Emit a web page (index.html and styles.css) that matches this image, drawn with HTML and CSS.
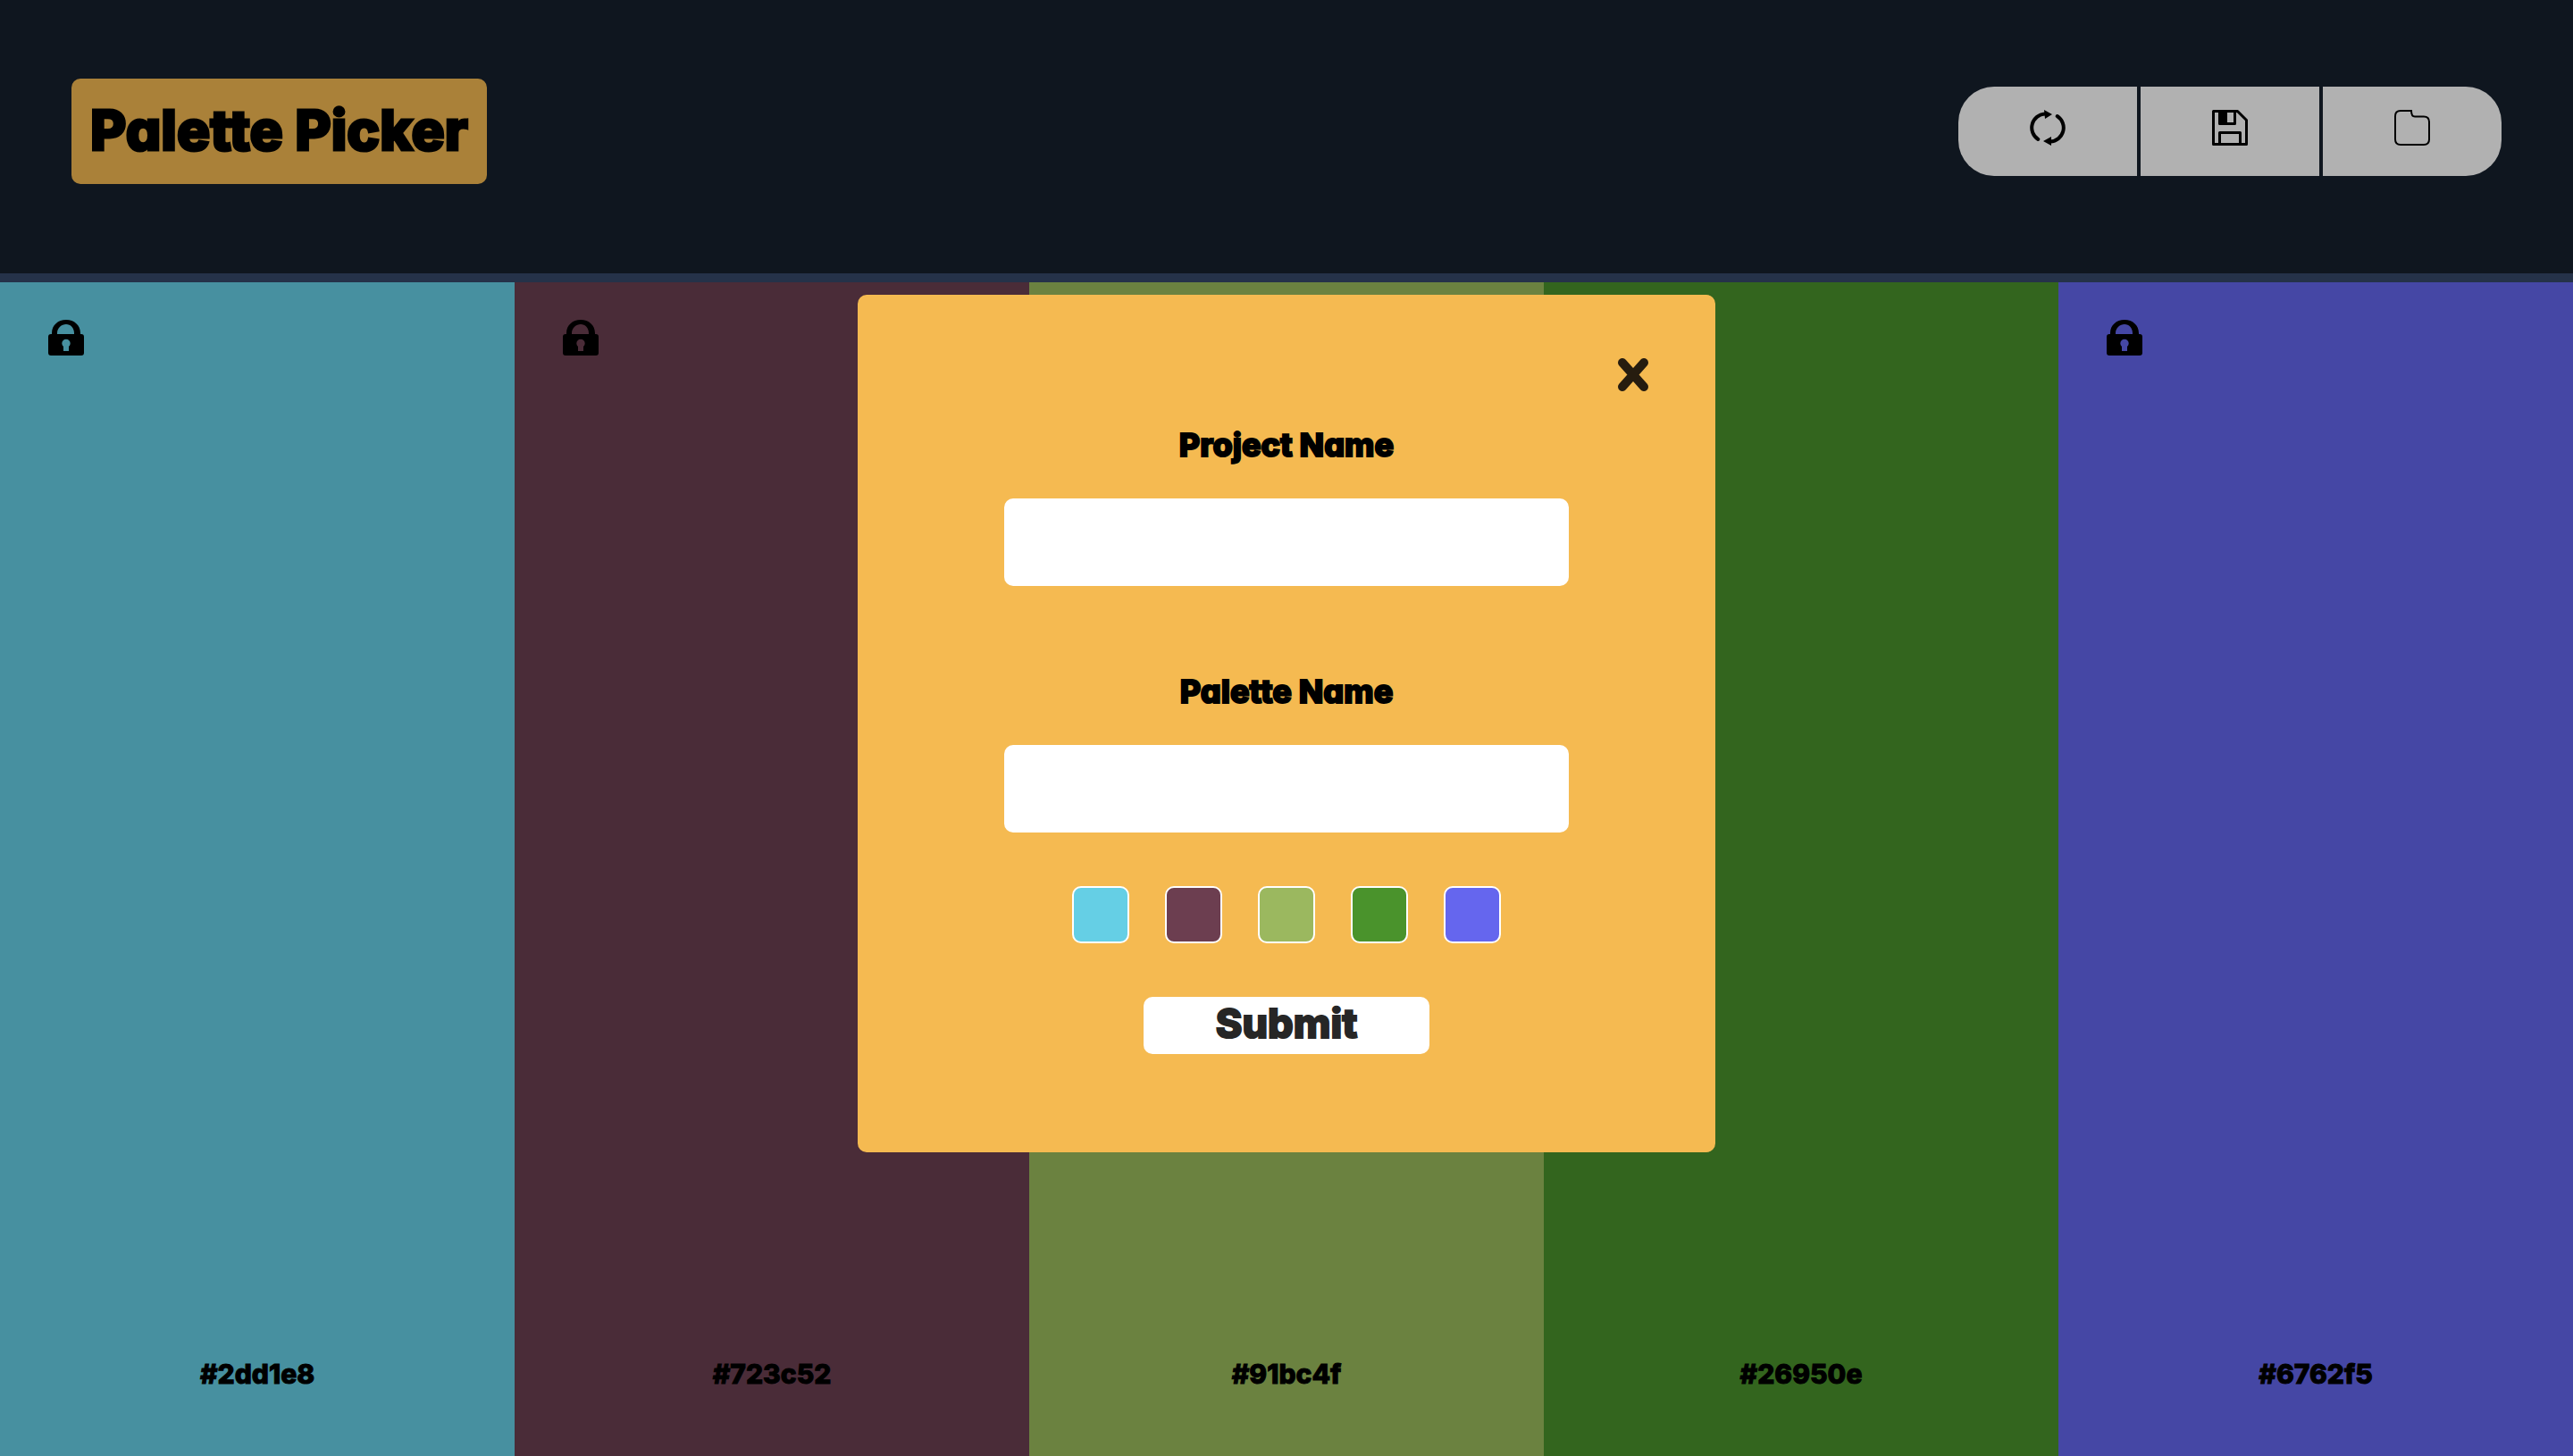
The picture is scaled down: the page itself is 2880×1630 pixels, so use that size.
FILE: index.html
```html
<!DOCTYPE html>
<html lang="en">
<head>
<meta charset="utf-8">
<meta name="viewport" content="width=device-width, initial-scale=1">
<title>Palette Picker</title>
<link rel="stylesheet" href="styles.css">
</head>
<body>
<svg class="sprite" aria-hidden="true">
  <symbol id="lock" viewBox="0 0 40 40">
    <path fill-rule="evenodd" d="M4 16v-1C4 6 11 0 20 0s16 6 16 15v1h1q3 0 3 3v18q0 3-3 3H3q-3 0-3-3V19q0-3 3-3zM10 16h19v-1c0-6-4-10-9-10s-10 4-10 10zM17 35V30a4.700 4.700 0 1 1 6 0v5z"/>
  </symbol>
</svg>
<div class="app">
  <header class="header">
    <h1 class="logo">Palette Picker</h1>
    <nav class="actions" aria-label="Palette actions">
      <button class="action" type="button" aria-label="Generate palette">
        <svg class="icon" viewBox="0 0 40 40">
          <path class="line" d="M9.300 33A15.500 15.500 0 0 1 17 4.500M30.700 7A15.500 15.500 0 0 1 23 35.500"/>
          <path d="M16 0l9 5-8 5zM24 30v10l-9-5z"/>
        </svg>
      </button>
      <button class="action" type="button" aria-label="Save palette">
        <svg class="icon" viewBox="0 0 40 40">
          <path class="line save" d="M1.500 1.500h27l10 10v27h-37zM8.500 38V25.500h23V38M8.500 2v13.500h17V2"/>
          <path d="M8 2h9v13H8z"/>
        </svg>
      </button>
      <button class="action" type="button" aria-label="Open projects">
        <svg class="icon" viewBox="0 0 40 40">
          <path class="line folder" d="M7 1h12c0 4 1 6.500 4 6.500h10q6 0 6 6V33q0 6-6 6H7q-6 0-6-6V7q0-6 6-6z"/>
        </svg>
      </button>
    </nav>
  </header>
  <main class="palette">
    <section class="color teal"><button class="lock" type="button" aria-label="Lock color"><svg class="icon"><use href="#lock"/></svg></button><h2 class="hex">#2dd1e8</h2></section>
    <section class="color plum"><button class="lock" type="button" aria-label="Lock color"><svg class="icon"><use href="#lock"/></svg></button><h2 class="hex">#723c52</h2></section>
    <section class="color olive"><button class="lock" type="button" aria-label="Lock color"><svg class="icon"><use href="#lock"/></svg></button><h2 class="hex">#91bc4f</h2></section>
    <section class="color forest"><button class="lock" type="button" aria-label="Lock color"><svg class="icon"><use href="#lock"/></svg></button><h2 class="hex">#26950e</h2></section>
    <section class="color indigo"><button class="lock" type="button" aria-label="Lock color"><svg class="icon"><use href="#lock"/></svg></button><h2 class="hex">#6762f5</h2></section>
  </main>
</div>
<div class="overlay">
  <form class="modal" role="dialog" aria-label="Save palette">
    <button class="close" type="button" aria-label="Close">
      <svg class="icon" viewBox="0 0 40 40"><path class="cross" d="M8 6l24 27M32 6L8 33"/></svg>
    </button>
    <label class="label" for="project">Project Name</label>
    <input class="field" id="project" type="text">
    <label class="label" for="palette">Palette Name</label>
    <input class="field" id="palette" type="text">
    <ul class="swatches">
      <li class="swatch sky"></li>
      <li class="swatch wine"></li>
      <li class="swatch lime"></li>
      <li class="swatch green"></li>
      <li class="swatch violet"></li>
    </ul>
    <button class="submit" type="submit">Submit</button>
  </form>
</div>
</body>
</html>
```
FILE: styles.css
```css
* {
  box-sizing: border-box;
}

body {
  margin: 0;
  color: #000;
  background: #0f161f;
  font-family: Inter, "Liberation Sans", sans-serif;
  font-weight: 800;
  font-feature-settings: "cv11";
}

button {
  padding: 0;
  border: 0;
  color: inherit;
  background: none;
  font: inherit;
  font-feature-settings: inherit;
  cursor: pointer;
}

.sprite {
  display: none;
}

.icon {
  display: block;
  width: 40px;
  height: 40px;
}

.line {
  fill: none;
  stroke: #000;
  stroke-width: 4;
  stroke-linecap: round;
}

.line.save {
  stroke-width: 3;
  stroke-linejoin: round;
}

.line.folder {
  stroke-width: 2;
}

.app {
  display: flex;
  flex-direction: column;
  min-height: 100vh;
}

.header {
  display: flex;
  align-items: center;
  justify-content: space-between;
  padding: 88px 80px 100px;
  border-bottom: 10px solid #253249;
}

.logo {
  margin: 0;
  padding: 0 21px 2px;
  border-radius: 10px;
  background: #aa8139;
  font-size: 62px;
  font-weight: 800;
  line-height: 116px;
  -webkit-text-stroke: 3px #000;
}

.actions {
  display: flex;
  gap: 4px;
}

.action {
  display: flex;
  justify-content: center;
  width: 200px;
  height: 100px;
  padding-top: 26px;
  background: #b1b1b1;
}

.action:first-child {
  border-radius: 40px 0 0 40px;
}

.action:last-child {
  border-radius: 0 40px 40px 0;
}

.palette {
  display: grid;
  grid-template-columns: repeat(5, 1fr);
  flex: 1;
}

.color {
  display: flex;
  flex-direction: column;
  justify-content: space-between;
  padding: 42px 54px 72px;
}

.lock {
  align-self: flex-start;
}

.hex {
  margin: 0;
  font-size: 30px;
  font-weight: 800;
  line-height: 40px;
  text-align: center;
  -webkit-text-stroke: 1px #000;
}

.teal { background: #4790a0; }
.plum { background: #4a2c38; }
.olive { background: #6b8240; }
.forest { background: #33651e; }
.indigo { background: #4547a5; }

.overlay {
  position: fixed;
  inset: 0;
  display: flex;
  align-items: flex-start;
  justify-content: center;
  padding-top: 330px;
}

.modal {
  display: flex;
  flex-direction: column;
  align-items: center;
  width: 960px;
  padding: 70px 72px 110px;
  border-radius: 10px;
  background: #f5ba51;
}

.close {
  align-self: flex-end;
}

.cross {
  fill: none;
  stroke: #261c0f;
  stroke-width: 10;
  stroke-linecap: round;
}

.label {
  margin-top: 34px;
  font-size: 36px;
  line-height: 48px;
  -webkit-text-stroke: 2px #000;
}

.field {
  width: 632px;
  height: 98px;
  margin: 36px 0 60px;
  padding: 0 20px;
  border: 0;
  border-radius: 10px;
  background: #fff;
  font: inherit;
  font-size: 36px;
}

.swatches {
  display: flex;
  gap: 40px;
  margin: 0 0 60px;
  padding: 0;
  list-style: none;
}

.swatch {
  width: 64px;
  height: 64px;
  border: 2px solid #fff;
  border-radius: 10px;
}

.sky { background: #65cfe5; }
.wine { background: #6c3e50; }
.lime { background: #9bb85f; }
.green { background: #4a932c; }
.violet { background: #6566ee; }

.submit {
  width: 320px;
  height: 64px;
  padding-bottom: 4px;
  border-radius: 10px;
  color: #262626;
  background: #fff;
  font-size: 45px;
  line-height: 60px;
  -webkit-text-stroke: 2px #262626;
}
```
